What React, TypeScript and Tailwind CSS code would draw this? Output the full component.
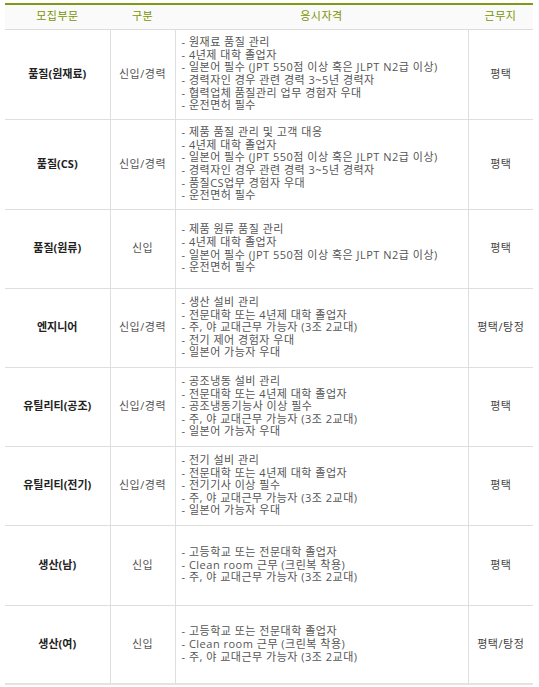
const rows = [
  {
    dept: '품질(원재료)',
    type: '신입/경력',
    h: 'h-[90px]',
    quals: [
      '원재료 품질 관리',
      '4년제 대학 졸업자',
      '일본어 필수 (JPT 550점 이상 혹은 JLPT N2급 이상)',
      '경력자인 경우 관련 경력 3~5년 경력자',
      '협력업체 품질관리 업무 경험자 우대',
      '운전면허 필수',
    ],
    place: '평택',
  },
  {
    dept: '품질(CS)',
    type: '신입/경력',
    h: 'h-[90px]',
    quals: [
      '제품 품질 관리 및 고객 대응',
      '4년제 대학 졸업자',
      '일본어 필수 (JPT 550점 이상 혹은 JLPT N2급 이상)',
      '경력자인 경우 관련 경력 3~5년 경력자',
      '품질CS업무 경험자 우대',
      '운전면허 필수',
    ],
    place: '평택',
  },
  {
    dept: '품질(원류)',
    type: '신입',
    h: 'h-[79px]',
    quals: [
      '제품 원류 품질 관리',
      '4년제 대학 졸업자',
      '일본어 필수 (JPT 550점 이상 혹은 JLPT N2급 이상)',
      '운전면허 필수',
    ],
    place: '평택',
  },
  {
    dept: '엔지니어',
    type: '신입/경력',
    h: 'h-[79px]',
    quals: [
      '생산 설비 관리',
      '전문대학 또는 4년제 대학 졸업자',
      '주, 야 교대근무 가능자 (3조 2교대)',
      '전기 제어 경험자 우대',
      '일본어 가능자 우대',
    ],
    place: '평택/탕정',
  },
  {
    dept: '유틸리티(공조)',
    type: '신입/경력',
    h: 'h-[79px]',
    quals: [
      '공조냉동 설비 관리',
      '전문대학 또는 4년제 대학 졸업자',
      '공조냉동기능사 이상 필수',
      '주, 야 교대근무 가능자 (3조 2교대)',
      '일본어 가능자 우대',
    ],
    place: '평택',
  },
  {
    dept: '유틸리티(전기)',
    type: '신입/경력',
    h: 'h-[79px]',
    quals: [
      '전기 설비 관리',
      '전문대학 또는 4년제 대학 졸업자',
      '전기기사 이상 필수',
      '주, 야 교대근무 가능자 (3조 2교대)',
      '일본어 가능자 우대',
    ],
    place: '평택',
  },
  {
    dept: '생산(남)',
    type: '신입',
    h: 'h-[80px]',
    quals: [
      '고등학교 또는 전문대학 졸업자',
      'Clean room 근무 (크린복 착용)',
      '주, 야 교대근무 가능자 (3조 2교대)',
    ],
    place: '평택',
  },
  {
    dept: '생산(여)',
    type: '신입',
    h: 'h-[79px]',
    quals: [
      '고등학교 또는 전문대학 졸업자',
      'Clean room 근무 (크린복 착용)',
      '주, 야 교대근무 가능자 (3조 2교대)',
    ],
    place: '평택/탕정',
  },
];

// Recruitment table: department / type / qualifications / location
export default function App() {
  return (
    <div className="bg-white px-[5px] pt-[3px] font-['Open_Sans','Noto_Sans_CJK_KR',sans-serif] text-[11px] leading-[12.6px] tracking-[0.5px] text-[#555]">
      <table className="w-[528px] table-fixed border-collapse border-b-2 border-b-[#e3e3e3]">
        <colgroup>
          <col className="w-[105px]" />
          <col className="w-[65px]" />
          <col className="w-[293px]" />
          <col className="w-[65px]" />
        </colgroup>
        <thead>
          <tr className="h-[25px] border-t-2 border-t-[#7f9a14] border-b border-b-[#dcdcdc] bg-[#fafafa] text-[#7a9400]">
            <th className="font-normal">모집부문</th>
            <th className="font-normal">구분</th>
            <th className="font-normal">응시자격</th>
            <th className="font-normal">근무지</th>
          </tr>
        </thead>
        <tbody>
          {rows.map((r) => (
            <tr key={r.dept} className={`${r.h} border-b border-b-[#dedede]`}>
              <td className="border-r border-r-[#dedede] text-center font-bold tracking-normal text-[#222]">
                {r.dept}
              </td>
              <td className="border-r border-r-[#dedede] text-center">{r.type}</td>
              <td className="border-r border-r-[#dedede] px-[6px] align-middle">
                {r.quals.map((q) => (
                  <div key={q} className="whitespace-nowrap">
                    - {q}
                  </div>
                ))}
              </td>
              <td className="text-center text-[#444]">{r.place}</td>
            </tr>
          ))}
        </tbody>
      </table>
    </div>
  );
}
